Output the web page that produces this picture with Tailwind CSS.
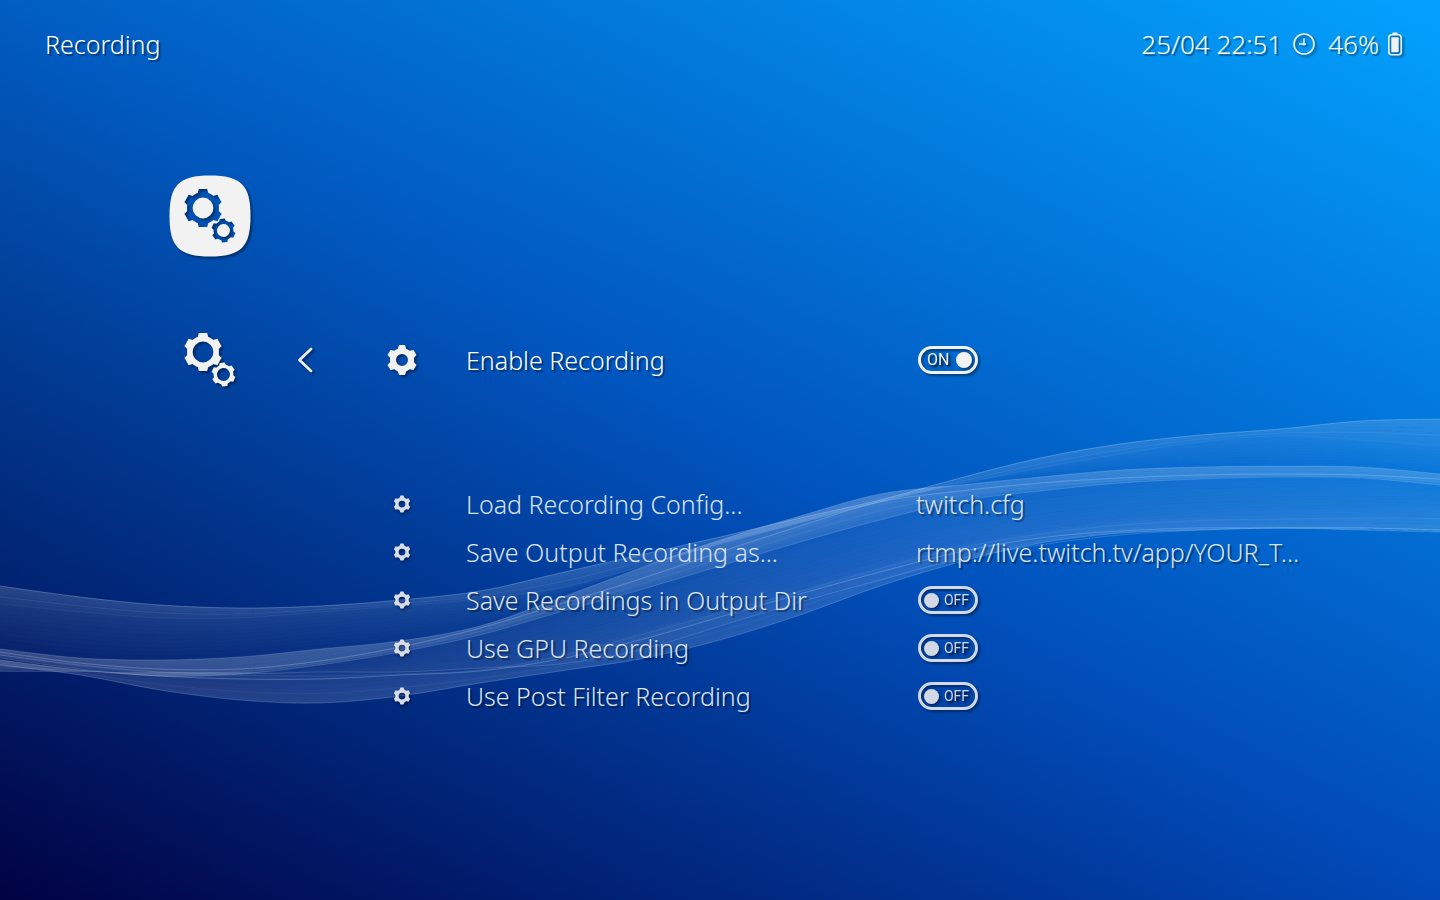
<!DOCTYPE html>
<html lang="en">
<head>
<meta charset="utf-8">
<meta name="viewport" content="width=device-width, initial-scale=1">
<title>Recording</title>
<script src="https://cdn.jsdelivr.net/npm/@tailwindcss/browser@4"></script>
</head>
<body class="relative isolate min-h-screen overflow-x-hidden bg-[#0153bc] font-['Noto_Sans','Open_Sans',sans-serif] text-[25px] leading-8 font-[350] text-white [font-variant-ligatures:none] [text-shadow:2px_2px_1px_rgb(0_0_0/0.4)]">

<!-- Backdrop: four-corner gradient split along the falling diagonal -->
<div class="absolute inset-0 -z-10 isolate overflow-hidden" aria-hidden="true">
  <div class="absolute inset-0 bg-[#03a2fe] bg-[linear-gradient(to_right,#02453c,#000),linear-gradient(to_top,#025947,#000)] bg-blend-difference"></div>
  <div class="absolute inset-0 isolate bg-[#010243] [clip-path:polygon(0_0,100%_100%,0_100%)]">
    <div class="absolute inset-0 bg-[linear-gradient(to_right,#000,#004774)] mix-blend-plus-lighter"></div>
    <div class="absolute inset-0 bg-[linear-gradient(to_top,#000,#005b7f)] mix-blend-plus-lighter"></div>
  </div>
  <svg id="waves" class="absolute inset-0 size-full" viewBox="0 0 1440 900" preserveAspectRatio="none" fill="none"></svg>
</div>

<svg class="hidden" aria-hidden="true">
  <symbol id="gear-wide" viewBox="-20 -20 40 40">
    <circle r="13.2" fill="none" stroke="currentColor" stroke-width="5.6"/>
    <g fill="currentColor">
      <path id="tw" d="M-5.500-14-4.200-19H4.200L5.500-14Z"/>
      <use href="#tw" transform="rotate(60)"/><use href="#tw" transform="rotate(120)"/><use href="#tw" transform="rotate(180)"/><use href="#tw" transform="rotate(240)"/><use href="#tw" transform="rotate(300)"/>
    </g>
  </symbol>
  <symbol id="gear" viewBox="-16 -16 32 32">
    <circle r="9" fill="none" stroke="currentColor" stroke-width="6"/>
    <g fill="currentColor">
      <path id="tn" d="M-4.500-10-3-15H3L4.500-10Z"/>
      <use href="#tn" transform="rotate(60)"/><use href="#tn" transform="rotate(120)"/><use href="#tn" transform="rotate(180)"/><use href="#tn" transform="rotate(240)"/><use href="#tn" transform="rotate(300)"/>
    </g>
  </symbol>
  <symbol id="gears" viewBox="0 0 96 96">
    <use href="#gear-wide" x="21" y="20" width="40" height="40"/>
    <use href="#gear-wide" x="49" y="50" width="25" height="25" transform="rotate(-6 61.5 62.5)"/>
  </symbol>
</svg>

<header class="flex h-[88px] items-center justify-between pl-[45px] pr-[37px]">
  <h1>Recording</h1>
  <div class="flex items-center text-[26px]">
    <time datetime="04-25T22:51">25/04 22:51</time>
    <svg class="ml-2.5 size-6 text-[#f2f2f2] drop-shadow-[2px_2px_1px_rgb(0_0_0/0.4)]" viewBox="0 0 24 24" fill="none" stroke="currentColor" aria-hidden="true"><circle cx="12" cy="12" r="10" stroke-width="1.6"/><path d="M12 6.500v7M7 12h7" stroke-width="1.4"/></svg>
    <span class="ml-3">46%</span>
    <svg class="ml-2 h-6 w-4 text-[#f2f2f2] drop-shadow-[2px_2px_1px_rgb(0_0_0/0.4)]" viewBox="0 0 16 24" fill="none" aria-hidden="true"><rect x="1.8" y="2.8" width="12.4" height="20" rx="3" stroke="currentColor" stroke-width="1.6"/><path d="M5 2.500 5.700.4h4.600L11 2.500Z" fill="currentColor"/><rect x="4.3" y="5.3" width="7.4" height="15" rx="1" fill="currentColor"/></svg>
  </div>
</header>

<main class="mt-20 pb-20 pl-[162px]">
  <button class="block size-24 text-[#f2f2f2] drop-shadow-[2px_2px_1px_rgb(0_0_0/0.4)]" aria-label="Settings">
    <svg class="size-24" viewBox="0 0 96 96" aria-hidden="true">
      <mask id="cut"><rect width="96" height="96" fill="#fff"/><use href="#gears" width="96" height="96" color="#000"/></mask>
      <path mask="url(#cut)" fill="currentColor" d="M48 7.500C79 7.500 88.500 17 88.500 48S79 88.500 48 88.500 7.500 79 7.500 48 17 7.500 48 7.500Z"/>
    </svg>
  </button>

  <ul class="mt-[72px]">
    <li class="grid h-12 grid-cols-[96px_96px_96px_466px_1fr] items-center">
      <svg class="-my-6 size-24 text-[#f2f2f2] drop-shadow-[2px_2px_1px_rgb(0_0_0/0.4)]" aria-hidden="true"><use href="#gears"/></svg>
      <button class="flex h-12 items-center justify-center text-[#f2f2f2]" aria-label="Back"><svg class="size-8 drop-shadow-[2px_2px_1px_rgb(0_0_0/0.4)]" viewBox="0 0 32 32" fill="none" stroke="currentColor" stroke-width="2.6" stroke-linecap="round" stroke-linejoin="round" aria-hidden="true"><path d="M21 5 9.500 16 21 27"/></svg></button>
      <svg class="size-8 justify-self-center text-[#f2f2f2] drop-shadow-[2px_2px_1px_rgb(0_0_0/0.4)]" aria-hidden="true"><use href="#gear"/></svg>
      <label for="enable" class="pl-4">Enable Recording</label>
      <span class="relative ml-0.5 flex h-7 w-[60px] items-center justify-between rounded-full border-3 border-[#f2f2f2] pl-1.5 pr-[3px] text-[#f2f2f2] drop-shadow-[2px_2px_1px_rgb(0_0_0/0.4)]">
        <input id="enable" type="checkbox" role="switch" checked class="absolute inset-0 appearance-none">
        <span class="font-['Roboto',sans-serif] text-base leading-none font-normal">ON</span><span class="size-4 rounded-full bg-current"></span>
      </span>
    </li>

    <li class="mt-24 grid h-12 grid-cols-[96px_466px_1fr] items-center pl-48 text-[#dae3f2]">
      <svg class="size-[18px] justify-self-center text-[#d8dce6] drop-shadow-[1px_2px_1px_rgb(0_0_0/0.4)]" aria-hidden="true"><use href="#gear"/></svg>
      <button class="pl-4 text-left">Load Recording Config...</button>
      <span>twitch.cfg</span>
    </li>
    <li class="grid h-12 grid-cols-[96px_466px_1fr] items-center pl-48 text-[#dae3f2]">
      <svg class="size-[18px] justify-self-center text-[#d8dce6] drop-shadow-[1px_2px_1px_rgb(0_0_0/0.4)]" aria-hidden="true"><use href="#gear"/></svg>
      <button class="pl-4 text-left">Save Output Recording as...</button>
      <span>rtmp://live.twitch.tv/app/YOUR_T...</span>
    </li>
    <li class="grid h-12 grid-cols-[96px_466px_1fr] items-center pl-48 text-[#dae3f2]">
      <svg class="size-[18px] justify-self-center text-[#d8dce6] drop-shadow-[1px_2px_1px_rgb(0_0_0/0.4)]" aria-hidden="true"><use href="#gear"/></svg>
      <label for="outdir" class="pl-4">Save Recordings in Output Dir</label>
      <span class="relative ml-0.5 flex h-7 w-[60px] items-center justify-between rounded-full border-3 border-[#d2d8e6] pl-[3px] pr-1.5 text-[#d2d8e6] drop-shadow-[2px_2px_1px_rgb(0_0_0/0.4)]">
        <input id="outdir" type="checkbox" role="switch" class="absolute inset-0 appearance-none">
        <span class="size-[15px] rounded-full bg-current"></span><span class="font-['Roboto',sans-serif] text-sm leading-none font-normal">OFF</span>
      </span>
    </li>
    <li class="grid h-12 grid-cols-[96px_466px_1fr] items-center pl-48 text-[#dae3f2]">
      <svg class="size-[18px] justify-self-center text-[#d8dce6] drop-shadow-[1px_2px_1px_rgb(0_0_0/0.4)]" aria-hidden="true"><use href="#gear"/></svg>
      <label for="gpu" class="pl-4">Use GPU Recording</label>
      <span class="relative ml-0.5 flex h-7 w-[60px] items-center justify-between rounded-full border-3 border-[#d2d8e6] pl-[3px] pr-1.5 text-[#d2d8e6] drop-shadow-[2px_2px_1px_rgb(0_0_0/0.4)]">
        <input id="gpu" type="checkbox" role="switch" class="absolute inset-0 appearance-none">
        <span class="size-[15px] rounded-full bg-current"></span><span class="font-['Roboto',sans-serif] text-sm leading-none font-normal">OFF</span>
      </span>
    </li>
    <li class="grid h-12 grid-cols-[96px_466px_1fr] items-center pl-48 text-[#dae3f2]">
      <svg class="size-[18px] justify-self-center text-[#d8dce6] drop-shadow-[1px_2px_1px_rgb(0_0_0/0.4)]" aria-hidden="true"><use href="#gear"/></svg>
      <label for="post" class="pl-4">Use Post Filter Recording</label>
      <span class="relative ml-0.5 flex h-7 w-[60px] items-center justify-between rounded-full border-3 border-[#d2d8e6] pl-[3px] pr-1.5 text-[#d2d8e6] drop-shadow-[2px_2px_1px_rgb(0_0_0/0.4)]">
        <input id="post" type="checkbox" role="switch" class="absolute inset-0 appearance-none">
        <span class="size-[15px] rounded-full bg-current"></span><span class="font-['Roboto',sans-serif] text-sm leading-none font-normal">OFF</span>
      </span>
    </li>
  </ul>
</main>

<script>
  // Heights of each strand of the ribbon, sampled every 80 units from x = 0 to x = 1440
  const S = {
    top:     [586,597,605,608,606,600,591,573,555,537,518,500,478,458,444,435,429,421,419],
    topIn:   [604,612,618,618,612,606,599,588,567,544,523,502,484,468,454,442,436,440,446],
    midTop:  [649,658,660,657,649,641,626,598,568,540,516,494,485,477,470,467,466,467,474],
    midIn:   [652,663,669,669,661,647,628,604,579,552,526,502,491,483,478,475,474,475,479],
    midBot:  [658,669,676,674,665,652,635,612,590,566,542,520,501,491,483,479,477,478,485],
    lowTop:  [672,672,672,672,673,673,669,653,630,609,589,565,544,530,519,513,510,508,507],
    lowIn:   [660,670,676,679,679,675,671,659,640,617,594,572,552,538,531,528,528,528,530],
    cross:   [655,665,672,674,672,672,668,664,650,626,602,580,559,545,535,530,528,528,530],
    bottom:  [665,675,690,700,703,696,683,671,659,640,615,586,562,543,533,530,528,530,532]
  };
  const svg = document.getElementById('waves');
  function curve(ys, reverse) {
    let p = ys.map((y, i) => [i * 80, y]);
    if (reverse) p.reverse();
    let d = p[0].join(' ');
    for (let i = 0; i < p.length - 1; i++) {
      const a = p[i - 1] || p[i], b = p[i], c = p[i + 1], e = p[i + 2] || c;
      d += 'C' + [b[0] + (c[0] - a[0]) / 6, b[1] + (c[1] - a[1]) / 6, c[0] - (e[0] - b[0]) / 6, c[1] - (e[1] - b[1]) / 6, c[0], c[1]].join(' ');
    }
    return d;
  }
  const mix = (a, b, t) => a.map((y, i) => y + (b[i] - y) * t);
  function add(attrs) {
    const el = document.createElementNS('http://www.w3.org/2000/svg', 'path');
    for (const k in attrs) el.setAttribute(k, attrs[k]);
    svg.append(el);
  }
  function band(a, b, alphaA, alphaB, steps) {
    for (let i = 0; i < steps; i++) {
      const t = i / steps, u = (i + 1) / steps;
      add({ d: 'M' + curve(mix(a, b, t)) + 'L' + curve(mix(a, b, u), true) + 'Z', fill: '#e6f2ff', 'fill-opacity': alphaA + (alphaB - alphaA) * t });
    }
  }
  const line = (a, o) => add({ d: 'M' + curve(a), stroke: '#d8eaff', 'stroke-opacity': o });
  band(S.top, S.topIn, .17, .12, 6);
  band(S.topIn, S.midTop, .1, .03, 10);
  band(S.midTop, S.midIn, .24, .22, 3);
  band(S.midIn, S.midBot, .22, .14, 4);
  band(S.midBot, S.lowTop, .05, .09, 10);
  band(S.lowTop, S.lowIn, .1, .16, 4);
  band(S.lowIn, S.bottom, .12, .16, 5);
  band(S.midIn, S.cross, .03, .05, 4);
  line(S.top, .25);
  line(mix(S.top, S.topIn, .6), .07);
  line(S.topIn, .06);
  line(S.midTop, .18);
  line(S.midIn, .25);
  line(mix(S.midIn, S.midBot, .5), .08);
  line(S.midBot, .16);
  line(S.lowIn, .24);
  line(S.cross, .16);
  line(mix(S.lowTop, S.lowIn, .5), .09);
  line(mix(S.lowIn, S.bottom, .6), .06);
  line(S.bottom, .2);
</script>
</body>
</html>
